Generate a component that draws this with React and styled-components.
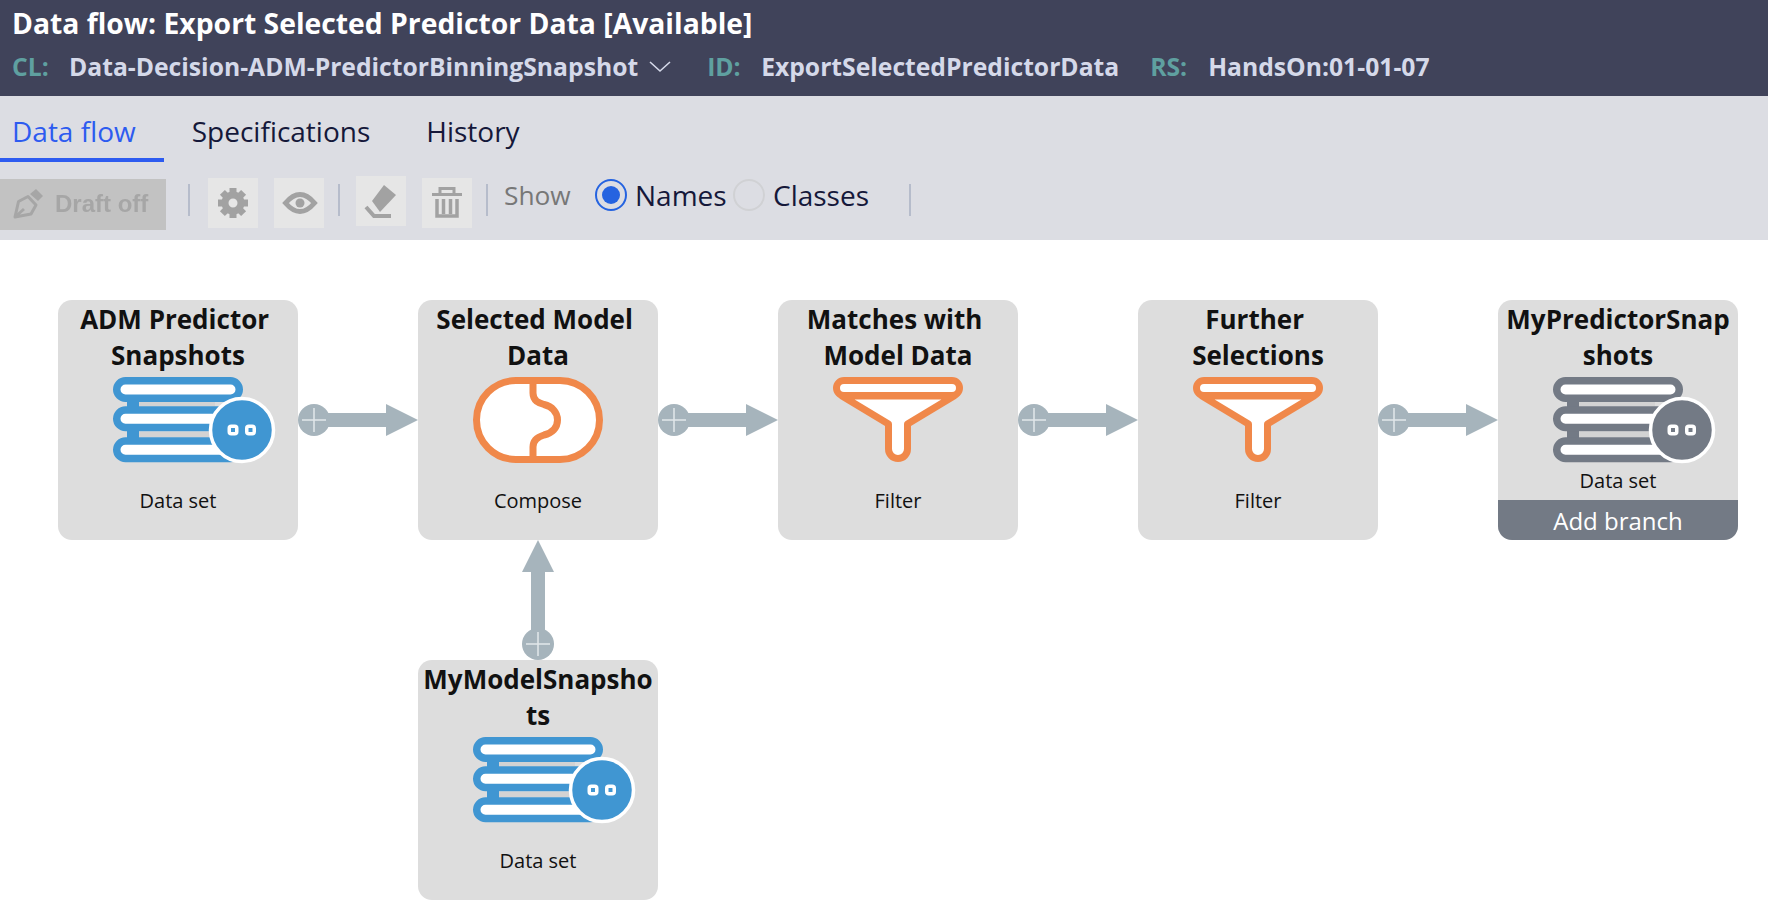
import React from 'react';
import styled, { createGlobalStyle } from 'styled-components';

const BLUE = '#4096d2';
const ORANGE = '#f0884a';
const SLATE = '#737a85';
const LINK = '#a6b4bc';

const GlobalStyle = createGlobalStyle`
  html, body {
    margin: 0;
    background: #fff;
    font-family: "Open Sans", "Liberation Sans", sans-serif;
    overflow: hidden;
  }
`;

// --- header ---
const Header = styled.header`
  height: 96px;
  box-sizing: border-box;
  padding: 5px 12px 0;
  background: #40435a;
`;

const Title = styled.h1`
  margin: 0;
  font-size: 28.3px;
  line-height: 36px;
  font-weight: 700;
  color: #fff;
  white-space: nowrap;
`;

const Meta = styled.div`
  display: flex;
  align-items: center;
  margin-top: 7px;
  height: 36px;
  font-size: 24.7px;
  font-weight: 700;
  white-space: nowrap;
`;

const MetaKey = styled.span`
  color: #5fa0a0;
  width: ${(p) => p.$w}px;
`;

const MetaValue = styled.span`
  color: #d5d9e9;
  margin-right: ${(p) => p.$gap}px;
`;

const Chevron = styled.svg`
  width: 22px;
  height: 12px;
  margin: 2px 36px 0 11px;
  flex: none;
`;

// --- tabs + toolbar ---
const Actions = styled.div`
  height: 144px;
  background: #dcdde3;
`;

const Tabs = styled.nav`
  display: flex;
  height: 66px;
`;

const Tab = styled.div`
  box-sizing: border-box;
  height: 66px;
  padding: ${(p) => (p.$first ? '16px 28px 0 12px' : '16px 28px 0')};
  font-size: 28px;
  line-height: 38px;
  color: ${(p) => (p.$active ? '#2d5bf0' : '#15183a')};
  border-bottom: 4px solid ${(p) => (p.$active ? '#2d5bf0' : 'transparent')};
`;

const Toolbar = styled.div`
  display: flex;
  align-items: flex-start;
`;

const DraftButton = styled.div`
  display: flex;
  align-items: center;
  gap: 12px;
  box-sizing: border-box;
  width: 166px;
  height: 51px;
  margin-top: 17px;
  padding: 0 0 2px 13px;
  background: #c2c2c2;
  color: #a6a6a6;
  font-family: "Liberation Sans", Arial, sans-serif;
  font-weight: 700;
  font-size: 24px;
  filter: blur(0.6px);
`;

const Separator = styled.span`
  flex: none;
  width: 2px;
  height: 32px;
  margin: 22px 0 0 ${(p) => p.$ml}px;
  background: #b6bccb;
`;

const Tile = styled.div`
  flex: none;
  display: flex;
  align-items: center;
  justify-content: center;
  width: 50px;
  height: 50px;
  margin: ${(p) => p.$mt ?? 16}px 0 0 ${(p) => p.$ml}px;
  background: #e6e6e6;
  color: #a2a2a2;
  filter: blur(0.4px);
`;

const ShowLabel = styled.span`
  margin: 15px 0 0 16px;
  width: 91px;
  font-size: 26.3px;
  line-height: 36px;
  color: #777;
`;

const RadioOption = styled.label`
  display: flex;
  align-items: center;
  margin-top: 17px;
  width: ${(p) => p.$w}px;
  font-size: 28px;
  line-height: 32px;
  color: #15183a;
`;

const RadioMark = styled.span`
  flex: none;
  position: relative;
  box-sizing: border-box;
  width: 32px;
  height: 32px;
  margin-right: 8px;
  border-radius: 50%;
  border: 2.5px solid ${(p) => (p.$on ? '#2563e0' : '#d0d1d4')};

  &::after {
    content: '';
    display: ${(p) => (p.$on ? 'block' : 'none')};
    position: absolute;
    inset: 5px;
    border-radius: 50%;
    background: #2563e0;
  }
`;

// --- canvas ---
const Canvas = styled.main`
  display: grid;
  grid-template-columns: repeat(5, 240px);
  grid-auto-rows: 240px;
  column-gap: 120px;
  row-gap: 120px;
  padding: 60px 0 0 58px;
`;

const Node = styled.div`
  position: relative;
  display: flex;
  flex-direction: column;
  align-items: center;
  grid-column: ${(p) => p.$col};
  background: #ddd;
  border-radius: 14px;
`;

const NodeTitle = styled.div`
  padding-top: 1px;
  font-size: 26px;
  font-weight: 700;
  line-height: 36px;
  text-align: center;
  white-space: nowrap;
  color: #111;
`;

const IconSvg = styled.svg`
  display: block;
  width: 130px;
  height: 86px;
  margin-top: 4px;
  overflow: visible;
  flex: none;
`;

const NodeLabel = styled.div`
  margin-top: ${(p) => (p.$compact ? 4 : 24)}px;
  font-size: 20px;
  line-height: 28px;
  color: #111;
`;

const AddBranch = styled.div`
  align-self: stretch;
  margin-top: auto;
  height: 40px;
  border-radius: 0 0 14px 14px;
  background: ${SLATE};
  color: #fff;
  font-size: 24px;
  line-height: 42px;
  text-align: center;
`;

const ArrowRight = styled.svg`
  position: absolute;
  left: 100%;
  top: 104px;
  width: 120px;
  height: 32px;
  overflow: visible;
`;

const ArrowUp = styled.svg`
  position: absolute;
  bottom: 100%;
  left: 104px;
  width: 32px;
  height: 120px;
  overflow: visible;
`;

function DataSetIcon({ color }) {
  return (
    <IconSvg viewBox="0 0 130 86">
      <rect x="14" y="24" width="12" height="38" fill={color} />
      <rect x="26" y="25" width="76" height="4.5" fill="#d3d3d3" />
      <rect x="26" y="55" width="76" height="5" fill="#d3d3d3" />
      {[3.75, 33, 64].map((y) => (
        <rect key={y} x="3.75" y={y} width="122.5" height="17.5" rx="8.75" fill="#fff" stroke={color} strokeWidth="7.5" />
      ))}
      <circle cx="129" cy="53" r="31.5" fill={color} stroke="#fff" strokeWidth="3.5" />
      {[120, 137.5].map((x) => (
        <rect key={x} x={x - 3.75} y="49.25" width="7.5" height="7.5" rx="2" fill={color} stroke="#fff" strokeWidth="3.5" />
      ))}
    </IconSvg>
  );
}

function ComposeIcon() {
  return (
    <IconSvg viewBox="0 0 130 86">
      <rect x="3.5" y="3.5" width="123" height="79" rx="39.5" fill="#fff" stroke={ORANGE} strokeWidth="7" />
      <path
        d="M60 3V16C60 24 66 26 71 27.5C79 29.5 84.5 35 84.5 43C84.5 51 79 56 71 58C66 59.5 60 62 60 70V83"
        fill="none"
        stroke={ORANGE}
        strokeWidth="7"
      />
    </IconSvg>
  );
}

function FilterIcon() {
  return (
    <IconSvg viewBox="0 0 130 86">
      <path
        d="M9 19L55.5 47V72A9.5 9.5 0 0 0 74.5 72V47L121 19Z"
        fill="#fff"
        stroke={ORANGE}
        strokeWidth="7"
        strokeLinejoin="round"
      />
      <rect x="3.5" y="3.5" width="123" height="15" rx="7.5" fill="#fff" stroke={ORANGE} strokeWidth="7" />
    </IconSvg>
  );
}

function Plus({ cx, cy }) {
  return (
    <path d={`M${cx - 12} ${cy}H${cx + 12}M${cx} ${cy - 12}V${cy + 12}`} stroke="#e2e7ea" strokeWidth="1.5" fill="none" />
  );
}

function RightLink() {
  return (
    <ArrowRight viewBox="0 0 120 32">
      <circle cx="16" cy="16" r="16" fill={LINK} />
      <path d="M26 9H88V0L120 16L88 32V23H26Z" fill={LINK} />
      <Plus cx={16} cy={16} />
    </ArrowRight>
  );
}

function UpLink() {
  return (
    <ArrowUp viewBox="0 0 32 120">
      <circle cx="16" cy="104" r="16" fill={LINK} />
      <path d="M9 95V32H0L16 0L32 32H23V95Z" fill={LINK} />
      <Plus cx={16} cy={104} />
    </ArrowUp>
  );
}

const PenIcon = () => (
  <svg width="30" height="30" viewBox="0 0 30 30" style={{ flex: 'none' }}>
    <path d="M2 28L5.5 12.5L15 7.5L23 16L18 25ZM2 28L11 20" fill="none" stroke="currentColor" strokeWidth="3" strokeLinejoin="round" />
    <path d="M17 5L23 0L30 7L25 12Z" fill="currentColor" />
  </svg>
);

const GearIcon = () => (
  <svg width="50" height="50" viewBox="0 0 50 50">
    <circle cx="25" cy="25" r="8" fill="none" stroke="currentColor" strokeWidth="7" />
    {[0, 45, 90, 135, 180, 225, 270, 315].map((deg) => (
      <rect key={deg} x="21.5" y="10" width="7" height="7" fill="currentColor" transform={`rotate(${deg} 25 25)`} />
    ))}
  </svg>
);

const EyeIcon = () => (
  <svg width="50" height="50" viewBox="0 0 50 50">
    <path d="M11.5 25Q26 8 40.5 25Q26 42 11.5 25Z" fill="none" stroke="currentColor" strokeWidth="5" />
    <circle cx="26" cy="25" r="4.5" fill="currentColor" />
  </svg>
);

const EraserIcon = () => (
  <svg width="50" height="50" viewBox="0 0 50 50">
    <path d="M28 9L40 19L24 36L16 25Z" fill="currentColor" />
    <path d="M10 31L18 40H35" fill="none" stroke="currentColor" strokeWidth="4" />
  </svg>
);

const TrashIcon = () => (
  <svg width="50" height="50" viewBox="0 0 50 50">
    <path d="M10 16.5H40M18 15V10.5H32V15" fill="none" stroke="currentColor" strokeWidth="3" />
    <path d="M15 21V38H35V21M21.5 21V36M28.5 21V36" fill="none" stroke="currentColor" strokeWidth="3.5" />
  </svg>
);

export default function App() {
  return (
    <>
      <GlobalStyle />
      <Header>
        <Title>Data flow: Export Selected Predictor Data [Available]</Title>
        <Meta>
          <MetaKey $w={57}>CL:</MetaKey>
          <MetaValue>Data-Decision-ADM-PredictorBinningSnapshot</MetaValue>
          <Chevron viewBox="0 0 22 12">
            <path d="M1 1L11 10L21 1" fill="none" stroke="#d5d9e9" strokeWidth="1.6" />
          </Chevron>
          <MetaKey $w={54}>ID:</MetaKey>
          <MetaValue $gap={31}>ExportSelectedPredictorData</MetaValue>
          <MetaKey $w={58}>RS:</MetaKey>
          <MetaValue>HandsOn:01-01-07</MetaValue>
        </Meta>
      </Header>

      <Actions>
        <Tabs>
          <Tab $first $active>Data flow</Tab>
          <Tab>Specifications</Tab>
          <Tab>History</Tab>
        </Tabs>
        <Toolbar>
          <DraftButton>
            <PenIcon />
            Draft off
          </DraftButton>
          <Separator $ml={22} />
          <Tile $ml={18}><GearIcon /></Tile>
          <Tile $ml={16}><EyeIcon /></Tile>
          <Separator $ml={14} />
          <Tile $ml={16} $mt={14}><EraserIcon /></Tile>
          <Tile $ml={16}><TrashIcon /></Tile>
          <Separator $ml={14} />
          <ShowLabel>Show</ShowLabel>
          <RadioOption $w={138}>
            <RadioMark $on />
            Names
          </RadioOption>
          <RadioOption $w={176}>
            <RadioMark />
            Classes
          </RadioOption>
          <Separator $ml={0} />
        </Toolbar>
      </Actions>

      <Canvas>
        <Node>
          <NodeTitle>ADM Predictor&nbsp;<br />Snapshots</NodeTitle>
          <DataSetIcon color={BLUE} />
          <NodeLabel>Data set</NodeLabel>
          <RightLink />
        </Node>
        <Node>
          <NodeTitle>Selected Model&nbsp;<br />Data</NodeTitle>
          <ComposeIcon />
          <NodeLabel>Compose</NodeLabel>
          <RightLink />
        </Node>
        <Node>
          <NodeTitle>Matches with&nbsp;<br />Model Data</NodeTitle>
          <FilterIcon />
          <NodeLabel>Filter</NodeLabel>
          <RightLink />
        </Node>
        <Node>
          <NodeTitle>Further&nbsp;<br />Selections</NodeTitle>
          <FilterIcon />
          <NodeLabel>Filter</NodeLabel>
          <RightLink />
        </Node>
        <Node>
          <NodeTitle>MyPredictorSnap<br />shots</NodeTitle>
          <DataSetIcon color={SLATE} />
          <NodeLabel $compact>Data set</NodeLabel>
          <AddBranch>Add branch</AddBranch>
        </Node>
        <Node $col={2}>
          <NodeTitle>MyModelSnapsho<br />ts</NodeTitle>
          <DataSetIcon color={BLUE} />
          <NodeLabel>Data set</NodeLabel>
          <UpLink />
        </Node>
      </Canvas>
    </>
  );
}
